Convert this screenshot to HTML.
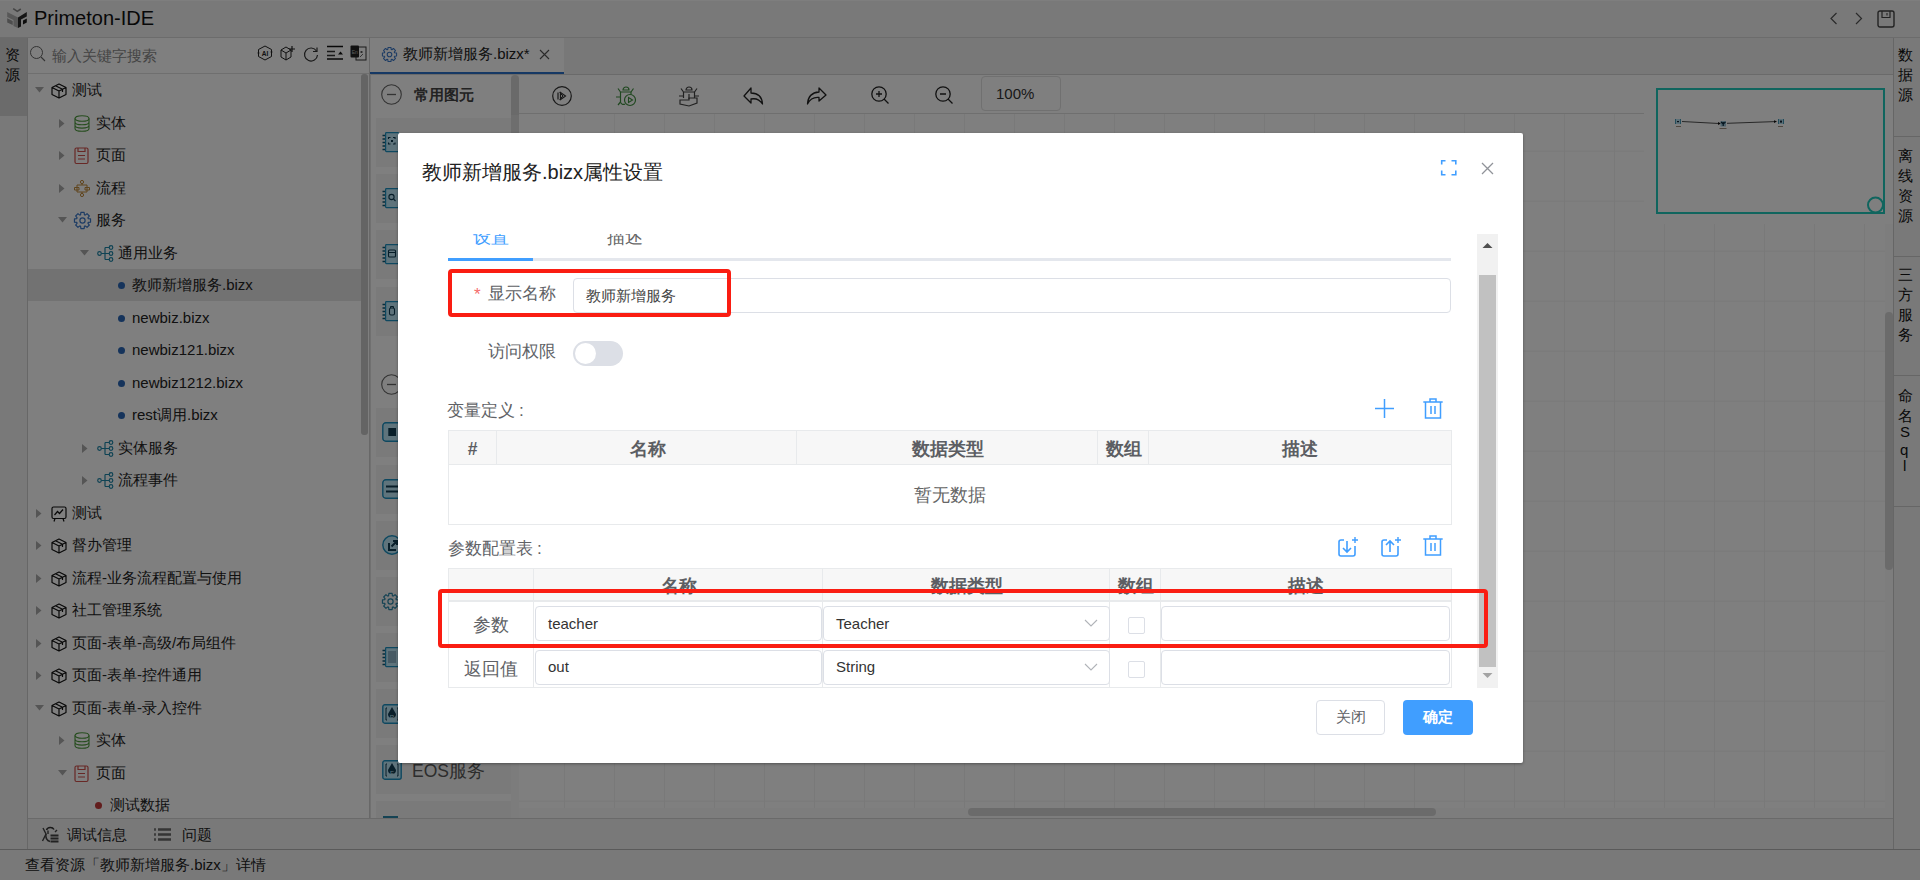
<!DOCTYPE html><html><head><meta charset="utf-8"><style>
*{box-sizing:border-box;margin:0;padding:0}
html,body{width:1920px;height:880px;overflow:hidden;background:#fff;font-family:"Liberation Sans",sans-serif;color:#222}
.a{position:absolute}
svg{position:absolute;overflow:visible}
.t{position:absolute;white-space:nowrap}
</style></head><body><div class="a" style="left:0px;top:0px;width:1920px;height:38px;background:#f3f3f3;border-bottom:1px solid #d9d9d9"></div>
<div class="a" style="left:0px;top:0px;width:1920px;height:1px;background:#fcfcfc"></div>
<svg class="a" style="left:4px;top:4px" width="28" height="28" viewBox="0 0 28 28" >
<path d="M9.2 4.6 L13.3 7.4 L16.8 5" fill="none" stroke="#888" stroke-width="1.6"/>
<path d="M3.2 8 L14 13.4 L14 24 L9.5 22 L9.5 16 L3.2 13Z" fill="#b0b0b0"/>
<path d="M3.2 14.3 L8.7 17 L8.7 21 L3.2 18.5Z" fill="#9a9a9a"/>
<path d="M14 13.4 L22.8 8 L22.8 12.5 L17 15.6 L17 22.5 L14 24Z" fill="#2a2a2a"/>
<path d="M19 16.5 L22.8 14.5 L22.8 18.5 L19 20.5Z" fill="#1a1a1a"/>
</svg>
<div class="t" style="left:34px;top:7px;font-size:20px;line-height:22px;color:#111;font-weight:normal;line-height:22px">Primeton-IDE</div>
<svg class="a" style="left:1829px;top:12px" width="10" height="14" viewBox="0 0 10 14" ><path d="M7.5 1 L2 6.5 L7.5 12" fill="none" stroke="#555" stroke-width="1.2"/></svg>
<svg class="a" style="left:1854px;top:12px" width="10" height="14" viewBox="0 0 10 14" ><path d="M2 1 L7.5 6.5 L2 12" fill="none" stroke="#555" stroke-width="1.2"/></svg>
<svg class="a" style="left:1877px;top:10px" width="18" height="18" viewBox="0 0 18 18" ><rect x="1" y="1" width="16" height="16" rx="2" fill="none" stroke="#444" stroke-width="1.4"/><path d="M5 1 V7.5 H13 V1" fill="none" stroke="#444" stroke-width="1.2"/><path d="M10 3 V5.5" stroke="#444" stroke-width="1.1"/></svg>
<div class="a" style="left:0px;top:38px;width:28px;height:811px;background:#f3f3f3;border-right:1px solid #cfcfcf"></div>
<div class="a" style="left:0px;top:38px;width:27px;height:78px;background:#d6d6d6"></div>
<div class="t" style="left:5px;top:46px;font-size:15px;line-height:17px;color:#111;font-weight:normal;">资</div>
<div class="t" style="left:5px;top:66px;font-size:15px;line-height:17px;color:#111;font-weight:normal;">源</div>
<div class="a" style="left:28px;top:38px;width:341px;height:780px;background:#fff"></div>
<div class="a" style="left:369px;top:38px;width:1px;height:780px;background:#d0d0d0"></div>
<div class="a" style="left:28px;top:73px;width:341px;height:1px;background:#dedede"></div>
<svg class="a" style="left:30px;top:46px" width="16" height="16" viewBox="0 0 16 16" ><circle cx="6.5" cy="6.5" r="6" fill="none" stroke="#666" stroke-width="1"/><path d="M11 11 L15 15" stroke="#666" stroke-width="1.1"/></svg>
<div class="t" style="left:52px;top:47px;font-size:15px;line-height:17px;color:#8a8a8a;font-weight:normal;">输入关键字搜索</div>
<svg class="a" style="left:257px;top:45px" width="16" height="16" viewBox="0 0 16 16" ><path d="M8 1 L14.5 4.5 L14.5 11.5 L8 15 L1.5 11.5 L1.5 4.5Z" fill="none" stroke="#222" stroke-width="1"/><circle cx="1.5" cy="8" r="0.9" fill="#222"/><circle cx="14.5" cy="7" r="0.9" fill="#222"/><text x="8" y="10.8" font-size="6.5" font-weight="bold" text-anchor="middle" fill="#222" font-family="Liberation Sans">AI</text></svg>
<svg class="a" style="left:280px;top:45px" width="17" height="16" viewBox="0 0 17 16" ><path d="M1 5 L6 2 L11 5 L11 12 L6 15 L1 12Z M1 5 L6 8 L11 5 M6 8 V15" fill="none" stroke="#222" stroke-width="1"/><path d="M12 1 V7 M9 4 H15" stroke="#222" stroke-width="1.2"/></svg>
<svg class="a" style="left:303px;top:46px" width="16" height="16" viewBox="0 0 16 16" ><path d="M13.5 5 A6.5 6.5 0 1 0 14.5 9" fill="none" stroke="#333" stroke-width="1.2"/><path d="M10 5.5 L14 5.5 L14 1.5" fill="none" stroke="#333" stroke-width="1.2"/></svg>
<svg class="a" style="left:327px;top:45px" width="16" height="16" viewBox="0 0 16 16" ><path d="M0 1.5 H16 M0 14 H16" stroke="#111" stroke-width="1.3"/><path d="M0 6.5 H8 M0 10.5 H8" stroke="#333" stroke-width="1.3"/><path d="M11 9.5 L13.5 6.5 L16 9.5Z" fill="#111"/></svg>
<svg class="a" style="left:350px;top:45px" width="17" height="16" viewBox="0 0 17 16" ><rect x="6" y="2" width="10" height="13" fill="none" stroke="#333" stroke-width="1"/><rect x="0.5" y="0.5" width="8.5" height="12" rx="1" fill="#222"/><text x="4.7" y="8.5" font-size="5" fill="#bbb" text-anchor="middle" font-family="Liberation Sans">En</text><path d="M10 7 L13 7 M11.5 6 L11.5 8 M10 12 L13 9" stroke="#444" stroke-width="0.8"/></svg>
<div class="a" style="left:361px;top:74px;width:7px;height:361px;background:#c8c8c8;border-radius:3px"></div>
<div class="a" style="left:0;top:0;width:369px;height:818px;overflow:hidden"><div class="a" style="left:28px;top:269px;width:333px;height:32px;background:#e4e4e4"></div><svg class="a" style="left:35px;top:87.0px" width="9" height="6" viewBox="0 0 9 6" ><path d="M0 0 H9 L4.5 5.5Z" fill="#aaa"/></svg><svg class="a" style="left:51px;top:82.5px" width="16" height="16" viewBox="0 0 16 16" ><path d="M8 1 L15 4.5 L15 11.5 L8 15 L1 11.5 L1 4.5Z M1 4.5 L8 8 L15 4.5 M8 8 V15 M4.5 2.8 L11.5 6.3 V9" fill="none" stroke="#111" stroke-width="1.2" stroke-linejoin="round"/></svg><div class="t" style="left:72px;top:81px;font-size:15px;line-height:17px;color:#222;font-weight:normal;"><span style="font-size:15px">测试</span></div><svg class="a" style="left:59px;top:118.5px" width="6" height="9" viewBox="0 0 6 9" ><path d="M0 0 V9 L5.5 4.5Z" fill="#aaa"/></svg><svg class="a" style="left:74px;top:115.0px" width="16" height="17" viewBox="0 0 16 17" ><ellipse cx="8" cy="3.5" rx="7" ry="2.8" fill="none" stroke="#4c9a3c" stroke-width="1.1"/><path d="M1 3.5 V13.5 A7 2.8 0 0 0 15 13.5 V3.5 M1 7 A7 2.8 0 0 0 15 7 M1 10.3 A7 2.8 0 0 0 15 10.3" fill="none" stroke="#4c9a3c" stroke-width="1.1"/></svg><div class="t" style="left:96px;top:114px;font-size:15px;line-height:17px;color:#222;font-weight:normal;"><span style="font-size:15px">实体</span></div><svg class="a" style="left:59px;top:150.5px" width="6" height="9" viewBox="0 0 6 9" ><path d="M0 0 V9 L5.5 4.5Z" fill="#aaa"/></svg><svg class="a" style="left:74px;top:147.0px" width="15" height="17" viewBox="0 0 15 17" ><rect x="1" y="1" width="13" height="15.5" rx="1.5" fill="none" stroke="#d0504c" stroke-width="1.2"/><path d="M4 1 V4.5 H11 V1 M4 8.5 H11 M4 12 H11" fill="none" stroke="#d0504c" stroke-width="1.2"/></svg><div class="t" style="left:96px;top:146px;font-size:15px;line-height:17px;color:#222;font-weight:normal;"><span style="font-size:15px">页面</span></div><svg class="a" style="left:59px;top:183.5px" width="6" height="9" viewBox="0 0 6 9" ><path d="M0 0 V9 L5.5 4.5Z" fill="#aaa"/></svg><svg class="a" style="left:74px;top:180.0px" width="16" height="17" viewBox="0 0 16 17" ><circle cx="8" cy="2" r="1.6" fill="none" stroke="#c08a3a" stroke-width="1"/><circle cx="8" cy="15" r="1.6" fill="none" stroke="#c08a3a" stroke-width="1"/><path d="M8 3.6 V5 M8 12 V13.4 M3 5 H13 V12 H3Z M0.5 7.5 H5 V10 H0.5Z M11 7.5 H15.5 V10 H11Z" fill="none" stroke="#c08a3a" stroke-width="1"/></svg><div class="t" style="left:96px;top:179px;font-size:15px;line-height:17px;color:#222;font-weight:normal;"><span style="font-size:15px">流程</span></div><svg class="a" style="left:58px;top:217.0px" width="9" height="6" viewBox="0 0 9 6" ><path d="M0 0 H9 L4.5 5.5Z" fill="#aaa"/></svg><svg class="a" style="left:74px;top:212.0px" width="17" height="17" viewBox="0 0 17 17" ><path d="M14.18 6.56 L16.54 6.87 L16.54 10.13 L14.18 10.44 L13.89 11.14 L15.33 13.03 L13.03 15.33 L11.14 13.89 L10.44 14.18 L10.13 16.54 L6.87 16.54 L6.56 14.18 L5.86 13.89 L3.97 15.33 L1.67 13.03 L3.11 11.14 L2.82 10.44 L0.46 10.13 L0.46 6.87 L2.82 6.56 L3.11 5.86 L1.67 3.97 L3.97 1.67 L5.86 3.11 L6.56 2.82 L6.87 0.46 L10.13 0.46 L10.44 2.82 L11.14 3.11 L13.03 1.67 L15.33 3.97 L13.89 5.86Z" fill="none" stroke="#3a78c9" stroke-width="1.2" stroke-linejoin="round"/><circle cx="8.5" cy="8.5" r="2.6" fill="none" stroke="#3a78c9" stroke-width="1.2"/></svg><div class="t" style="left:96px;top:211px;font-size:15px;line-height:17px;color:#222;font-weight:normal;"><span style="font-size:15px">服务</span></div><svg class="a" style="left:80px;top:250.0px" width="9" height="6" viewBox="0 0 9 6" ><path d="M0 0 H9 L4.5 5.5Z" fill="#aaa"/></svg><svg class="a" style="left:97px;top:245.0px" width="17" height="17" viewBox="0 0 17 17" ><circle cx="2.5" cy="8.5" r="1.8" fill="none" stroke="#1f86a8" stroke-width="1.2"/><circle cx="14" cy="2.5" r="1.8" fill="none" stroke="#1f86a8" stroke-width="1.2"/><circle cx="14" cy="8.5" r="1.8" fill="none" stroke="#1f86a8" stroke-width="1.2"/><circle cx="14" cy="14.5" r="1.8" fill="none" stroke="#1f86a8" stroke-width="1.2"/><path d="M4.3 8.5 H12.2 M8 2.5 V14.5 M8 2.5 H12.2 M8 14.5 H12.2" fill="none" stroke="#1f86a8" stroke-width="1.2"/></svg><div class="t" style="left:118px;top:244px;font-size:15px;line-height:17px;color:#222;font-weight:normal;"><span style="font-size:15px">通用业务</span></div><div class="a" style="left:118px;top:282px;width:7px;height:7px;border-radius:4px;background:#2a67b6"></div><div class="t" style="left:132px;top:276px;font-size:15px;line-height:17px;color:#222;font-weight:normal;"><span style="font-size:15px">教师新增服务</span>.bizx</div><div class="a" style="left:118px;top:315px;width:7px;height:7px;border-radius:4px;background:#2a67b6"></div><div class="t" style="left:132px;top:309px;font-size:15px;line-height:17px;color:#222;font-weight:normal;">newbiz.bizx</div><div class="a" style="left:118px;top:347px;width:7px;height:7px;border-radius:4px;background:#2a67b6"></div><div class="t" style="left:132px;top:341px;font-size:15px;line-height:17px;color:#222;font-weight:normal;">newbiz121.bizx</div><div class="a" style="left:118px;top:380px;width:7px;height:7px;border-radius:4px;background:#2a67b6"></div><div class="t" style="left:132px;top:374px;font-size:15px;line-height:17px;color:#222;font-weight:normal;">newbiz1212.bizx</div><div class="a" style="left:118px;top:412px;width:7px;height:7px;border-radius:4px;background:#2a67b6"></div><div class="t" style="left:132px;top:406px;font-size:15px;line-height:17px;color:#222;font-weight:normal;">rest<span style="font-size:15px">调用</span>.bizx</div><svg class="a" style="left:82px;top:443.5px" width="6" height="9" viewBox="0 0 6 9" ><path d="M0 0 V9 L5.5 4.5Z" fill="#aaa"/></svg><svg class="a" style="left:97px;top:440.0px" width="17" height="17" viewBox="0 0 17 17" ><circle cx="2.5" cy="8.5" r="1.8" fill="none" stroke="#1f86a8" stroke-width="1.2"/><circle cx="14" cy="2.5" r="1.8" fill="none" stroke="#1f86a8" stroke-width="1.2"/><circle cx="14" cy="8.5" r="1.8" fill="none" stroke="#1f86a8" stroke-width="1.2"/><circle cx="14" cy="14.5" r="1.8" fill="none" stroke="#1f86a8" stroke-width="1.2"/><path d="M4.3 8.5 H12.2 M8 2.5 V14.5 M8 2.5 H12.2 M8 14.5 H12.2" fill="none" stroke="#1f86a8" stroke-width="1.2"/></svg><div class="t" style="left:118px;top:439px;font-size:15px;line-height:17px;color:#222;font-weight:normal;"><span style="font-size:15px">实体服务</span></div><svg class="a" style="left:82px;top:475.5px" width="6" height="9" viewBox="0 0 6 9" ><path d="M0 0 V9 L5.5 4.5Z" fill="#aaa"/></svg><svg class="a" style="left:97px;top:472.0px" width="17" height="17" viewBox="0 0 17 17" ><circle cx="2.5" cy="8.5" r="1.8" fill="none" stroke="#1f86a8" stroke-width="1.2"/><circle cx="14" cy="2.5" r="1.8" fill="none" stroke="#1f86a8" stroke-width="1.2"/><circle cx="14" cy="8.5" r="1.8" fill="none" stroke="#1f86a8" stroke-width="1.2"/><circle cx="14" cy="14.5" r="1.8" fill="none" stroke="#1f86a8" stroke-width="1.2"/><path d="M4.3 8.5 H12.2 M8 2.5 V14.5 M8 2.5 H12.2 M8 14.5 H12.2" fill="none" stroke="#1f86a8" stroke-width="1.2"/></svg><div class="t" style="left:118px;top:471px;font-size:15px;line-height:17px;color:#222;font-weight:normal;"><span style="font-size:15px">流程事件</span></div><svg class="a" style="left:36px;top:508.5px" width="6" height="9" viewBox="0 0 6 9" ><path d="M0 0 V9 L5.5 4.5Z" fill="#aaa"/></svg><svg class="a" style="left:51px;top:505.5px" width="16" height="16" viewBox="0 0 16 16" ><rect x="1" y="1" width="14" height="11.5" rx="1.5" fill="none" stroke="#111" stroke-width="1.2"/><path d="M3.5 9 L6.5 5.5 L8.5 7.5 L12 3.5 M4 12.5 L3 15.5 M12 12.5 L13 15.5" fill="none" stroke="#111" stroke-width="1.2"/></svg><div class="t" style="left:72px;top:504px;font-size:15px;line-height:17px;color:#222;font-weight:normal;"><span style="font-size:15px">测试</span></div><svg class="a" style="left:36px;top:540.5px" width="6" height="9" viewBox="0 0 6 9" ><path d="M0 0 V9 L5.5 4.5Z" fill="#aaa"/></svg><svg class="a" style="left:51px;top:537.5px" width="16" height="16" viewBox="0 0 16 16" ><path d="M8 1 L15 4.5 L15 11.5 L8 15 L1 11.5 L1 4.5Z M1 4.5 L8 8 L15 4.5 M8 8 V15 M4.5 2.8 L11.5 6.3 V9" fill="none" stroke="#111" stroke-width="1.2" stroke-linejoin="round"/></svg><div class="t" style="left:72px;top:536px;font-size:15px;line-height:17px;color:#222;font-weight:normal;"><span style="font-size:15px">督办管理</span></div><svg class="a" style="left:36px;top:573.5px" width="6" height="9" viewBox="0 0 6 9" ><path d="M0 0 V9 L5.5 4.5Z" fill="#aaa"/></svg><svg class="a" style="left:51px;top:570.5px" width="16" height="16" viewBox="0 0 16 16" ><path d="M8 1 L15 4.5 L15 11.5 L8 15 L1 11.5 L1 4.5Z M1 4.5 L8 8 L15 4.5 M8 8 V15 M4.5 2.8 L11.5 6.3 V9" fill="none" stroke="#111" stroke-width="1.2" stroke-linejoin="round"/></svg><div class="t" style="left:72px;top:569px;font-size:15px;line-height:17px;color:#222;font-weight:normal;"><span style="font-size:15px">流程</span>-<span style="font-size:15px">业务流程配置与使用</span></div><svg class="a" style="left:36px;top:605.5px" width="6" height="9" viewBox="0 0 6 9" ><path d="M0 0 V9 L5.5 4.5Z" fill="#aaa"/></svg><svg class="a" style="left:51px;top:602.5px" width="16" height="16" viewBox="0 0 16 16" ><path d="M8 1 L15 4.5 L15 11.5 L8 15 L1 11.5 L1 4.5Z M1 4.5 L8 8 L15 4.5 M8 8 V15 M4.5 2.8 L11.5 6.3 V9" fill="none" stroke="#111" stroke-width="1.2" stroke-linejoin="round"/></svg><div class="t" style="left:72px;top:601px;font-size:15px;line-height:17px;color:#222;font-weight:normal;"><span style="font-size:15px">社工管理系统</span></div><svg class="a" style="left:36px;top:638.5px" width="6" height="9" viewBox="0 0 6 9" ><path d="M0 0 V9 L5.5 4.5Z" fill="#aaa"/></svg><svg class="a" style="left:51px;top:635.5px" width="16" height="16" viewBox="0 0 16 16" ><path d="M8 1 L15 4.5 L15 11.5 L8 15 L1 11.5 L1 4.5Z M1 4.5 L8 8 L15 4.5 M8 8 V15 M4.5 2.8 L11.5 6.3 V9" fill="none" stroke="#111" stroke-width="1.2" stroke-linejoin="round"/></svg><div class="t" style="left:72px;top:634px;font-size:15px;line-height:17px;color:#222;font-weight:normal;"><span style="font-size:15px">页面</span>-<span style="font-size:15px">表单</span>-<span style="font-size:15px">高级</span>/<span style="font-size:15px">布局组件</span></div><svg class="a" style="left:36px;top:670.5px" width="6" height="9" viewBox="0 0 6 9" ><path d="M0 0 V9 L5.5 4.5Z" fill="#aaa"/></svg><svg class="a" style="left:51px;top:667.5px" width="16" height="16" viewBox="0 0 16 16" ><path d="M8 1 L15 4.5 L15 11.5 L8 15 L1 11.5 L1 4.5Z M1 4.5 L8 8 L15 4.5 M8 8 V15 M4.5 2.8 L11.5 6.3 V9" fill="none" stroke="#111" stroke-width="1.2" stroke-linejoin="round"/></svg><div class="t" style="left:72px;top:666px;font-size:15px;line-height:17px;color:#222;font-weight:normal;"><span style="font-size:15px">页面</span>-<span style="font-size:15px">表单</span>-<span style="font-size:15px">控件通用</span></div><svg class="a" style="left:35px;top:705.0px" width="9" height="6" viewBox="0 0 9 6" ><path d="M0 0 H9 L4.5 5.5Z" fill="#aaa"/></svg><svg class="a" style="left:51px;top:700.5px" width="16" height="16" viewBox="0 0 16 16" ><path d="M8 1 L15 4.5 L15 11.5 L8 15 L1 11.5 L1 4.5Z M1 4.5 L8 8 L15 4.5 M8 8 V15 M4.5 2.8 L11.5 6.3 V9" fill="none" stroke="#111" stroke-width="1.2" stroke-linejoin="round"/></svg><div class="t" style="left:72px;top:699px;font-size:15px;line-height:17px;color:#222;font-weight:normal;"><span style="font-size:15px">页面</span>-<span style="font-size:15px">表单</span>-<span style="font-size:15px">录入控件</span></div><svg class="a" style="left:59px;top:735.5px" width="6" height="9" viewBox="0 0 6 9" ><path d="M0 0 V9 L5.5 4.5Z" fill="#aaa"/></svg><svg class="a" style="left:74px;top:732.0px" width="16" height="17" viewBox="0 0 16 17" ><ellipse cx="8" cy="3.5" rx="7" ry="2.8" fill="none" stroke="#4c9a3c" stroke-width="1.1"/><path d="M1 3.5 V13.5 A7 2.8 0 0 0 15 13.5 V3.5 M1 7 A7 2.8 0 0 0 15 7 M1 10.3 A7 2.8 0 0 0 15 10.3" fill="none" stroke="#4c9a3c" stroke-width="1.1"/></svg><div class="t" style="left:96px;top:731px;font-size:15px;line-height:17px;color:#222;font-weight:normal;"><span style="font-size:15px">实体</span></div><svg class="a" style="left:58px;top:770.0px" width="9" height="6" viewBox="0 0 9 6" ><path d="M0 0 H9 L4.5 5.5Z" fill="#aaa"/></svg><svg class="a" style="left:74px;top:765.0px" width="15" height="17" viewBox="0 0 15 17" ><rect x="1" y="1" width="13" height="15.5" rx="1.5" fill="none" stroke="#d0504c" stroke-width="1.2"/><path d="M4 1 V4.5 H11 V1 M4 8.5 H11 M4 12 H11" fill="none" stroke="#d0504c" stroke-width="1.2"/></svg><div class="t" style="left:96px;top:764px;font-size:15px;line-height:17px;color:#222;font-weight:normal;"><span style="font-size:15px">页面</span></div><div class="a" style="left:95px;top:802px;width:7px;height:7px;border-radius:4px;background:#c43a3a"></div><div class="t" style="left:110px;top:796px;font-size:15px;line-height:17px;color:#222;font-weight:normal;"><span style="font-size:15px">测试数据</span></div></div>
<div class="a" style="left:370px;top:38px;width:1523px;height:37px;background:#f1f1f1;border-bottom:1px solid #d4d4d4"></div>
<div class="a" style="left:370px;top:38px;width:194px;height:36px;background:#fefefe"></div>
<div class="a" style="left:370px;top:72px;width:194px;height:2px;background:#2a70c8"></div>
<svg class="a" style="left:382px;top:47.0px" width="15" height="15" viewBox="0 0 17 17" ><path d="M14.18 6.56 L16.54 6.87 L16.54 10.13 L14.18 10.44 L13.89 11.14 L15.33 13.03 L13.03 15.33 L11.14 13.89 L10.44 14.18 L10.13 16.54 L6.87 16.54 L6.56 14.18 L5.86 13.89 L3.97 15.33 L1.67 13.03 L3.11 11.14 L2.82 10.44 L0.46 10.13 L0.46 6.87 L2.82 6.56 L3.11 5.86 L1.67 3.97 L3.97 1.67 L5.86 3.11 L6.56 2.82 L6.87 0.46 L10.13 0.46 L10.44 2.82 L11.14 3.11 L13.03 1.67 L15.33 3.97 L13.89 5.86Z" fill="none" stroke="#3a78c9" stroke-width="1.2" stroke-linejoin="round"/><circle cx="8.5" cy="8.5" r="2.6" fill="none" stroke="#3a78c9" stroke-width="1.2"/></svg>
<div class="t" style="left:403px;top:45px;font-size:15px;line-height:17px;color:#222;font-weight:normal;">教师新增服务.bizx*</div>
<svg class="a" style="left:539px;top:49px" width="11" height="11" viewBox="0 0 11 11" ><path d="M1 1 L10 10 M10 1 L1 10" stroke="#555" stroke-width="1.1"/></svg>
<div class="a" style="left:370px;top:75px;width:142px;height:743px;background:#fefefe"></div>
<div class="a" style="left:511px;top:75px;width:8px;height:743px;background:#f8f8f8"></div>
<div class="a" style="left:511px;top:115px;width:8px;height:100px;background:#dcdcdc"></div>
<div class="a" style="left:511px;top:75px;width:8px;height:40px;background:#d4d4d4;border-radius:4px 4px 0 0"></div>
<svg class="a" style="left:381px;top:84px" width="21" height="21" viewBox="0 0 21 21" ><circle cx="10.5" cy="10.5" r="9.8" fill="none" stroke="#666" stroke-width="1.1"/><path d="M6 10.5 H15" stroke="#666" stroke-width="1.3"/></svg>
<div class="t" style="left:414px;top:86px;font-size:15px;line-height:17px;color:#444;font-weight:bold;">常用图元</div>
<div class="a" style="left:376px;top:118px;width:135px;height:49px;background:#f5f5f5"></div>
<div class="a" style="left:376px;top:174px;width:135px;height:49px;background:#f5f5f5"></div>
<div class="a" style="left:376px;top:230px;width:135px;height:49px;background:#f5f5f5"></div>
<div class="a" style="left:376px;top:287px;width:135px;height:49px;background:#f5f5f5"></div>
<svg class="a" style="left:382px;top:132px" width="17" height="20" viewBox="0 0 17 20" ><path d="M0.5 3.5 H3 M0.5 7 H3 M0.5 10.5 H3 M0.5 14 H3 M0.5 17.5 H3" stroke="#0f5a78" stroke-width="1.3"/><rect x="3.6" y="0.6" width="13" height="19" rx="0.8" fill="#bfe8f8" stroke="#1c90c0" stroke-width="1.2"/><path d="M6.5 7 V5.5 H8.5 M11 5.5 H13 V7 M13 10.5 V12 H11 M8.5 12 H6.5 V10.5" fill="none" stroke="#0d3a50" stroke-width="1.1"/><rect x="9" y="8" width="2" height="2" fill="#0d3a50"/></svg>
<svg class="a" style="left:382px;top:188px" width="17" height="20" viewBox="0 0 17 20" ><path d="M0.5 3.5 H3 M0.5 7 H3 M0.5 10.5 H3 M0.5 14 H3 M0.5 17.5 H3" stroke="#0f5a78" stroke-width="1.3"/><rect x="3.6" y="0.6" width="13" height="19" rx="0.8" fill="#bfe8f8" stroke="#1c90c0" stroke-width="1.2"/><circle cx="9.5" cy="9" r="2.6" fill="none" stroke="#0d3a50" stroke-width="1.1"/><path d="M11.5 11 L13.5 13" stroke="#0d3a50" stroke-width="1.1"/></svg>
<svg class="a" style="left:382px;top:244px" width="17" height="20" viewBox="0 0 17 20" ><path d="M0.5 3.5 H3 M0.5 7 H3 M0.5 10.5 H3 M0.5 14 H3 M0.5 17.5 H3" stroke="#0f5a78" stroke-width="1.3"/><rect x="3.6" y="0.6" width="13" height="19" rx="0.8" fill="#bfe8f8" stroke="#1c90c0" stroke-width="1.2"/><rect x="6.5" y="6" width="7" height="7" rx="1" fill="none" stroke="#0d3a50" stroke-width="1.1"/><path d="M6.5 8.5 H13.5" stroke="#0d3a50" stroke-width="1"/></svg>
<svg class="a" style="left:382px;top:301px" width="17" height="20" viewBox="0 0 17 20" ><path d="M0.5 3.5 H3 M0.5 7 H3 M0.5 10.5 H3 M0.5 14 H3 M0.5 17.5 H3" stroke="#0f5a78" stroke-width="1.3"/><rect x="3.6" y="0.6" width="13" height="19" rx="0.8" fill="#bfe8f8" stroke="#1c90c0" stroke-width="1.2"/><rect x="7.5" y="7" width="5" height="7" rx="1.5" fill="none" stroke="#0d3a50" stroke-width="1.1"/><path d="M8.5 7 V5.5 H11.5 V7" fill="none" stroke="#0d3a50" stroke-width="1"/></svg>
<svg class="a" style="left:381px;top:374px" width="21" height="21" viewBox="0 0 21 21" ><circle cx="10.5" cy="10.5" r="9.8" fill="none" stroke="#666" stroke-width="1.1"/><path d="M6 10.5 H15" stroke="#666" stroke-width="1.3"/></svg>
<div class="a" style="left:376px;top:408px;width:135px;height:49px;background:#f5f5f5"></div>
<div class="a" style="left:376px;top:465px;width:135px;height:49px;background:#f5f5f5"></div>
<div class="a" style="left:376px;top:521px;width:135px;height:49px;background:#f5f5f5"></div>
<div class="a" style="left:376px;top:577px;width:135px;height:49px;background:#f5f5f5"></div>
<div class="a" style="left:376px;top:633px;width:135px;height:49px;background:#f5f5f5"></div>
<div class="a" style="left:376px;top:689px;width:135px;height:49px;background:#f5f5f5"></div>
<div class="a" style="left:376px;top:745px;width:135px;height:49px;background:#f5f5f5"></div>
<div class="a" style="left:376px;top:801px;width:135px;height:49px;background:#f5f5f5"></div>
<svg class="a" style="left:382px;top:422px" width="20" height="20" viewBox="0 0 20 20" ><rect x="0.8" y="0.8" width="18.4" height="18.4" rx="3" fill="#bfe8f8" stroke="#1c90c0" stroke-width="1.4"/><rect x="6.3" y="6" width="7.7" height="8" fill="#123e55"/></svg>
<svg class="a" style="left:382px;top:479px" width="20" height="20" viewBox="0 0 20 20" ><rect x="0.8" y="0.8" width="18.4" height="18.4" rx="3" fill="#bfe8f8" stroke="#1c90c0" stroke-width="1.4"/><path d="M4 7.5 H16 M4 12.5 H16" stroke="#123e55" stroke-width="2.2"/></svg>
<svg class="a" style="left:382px;top:535px" width="20" height="20" viewBox="0 0 20 20" ><circle cx="10" cy="10" r="9.2" fill="#bfe8f8" stroke="#1c90c0" stroke-width="1.4"/><path d="M7 8 V15 H14 M9.5 11.5 L14 7 M11 6 H15 V10" fill="none" stroke="#123e55" stroke-width="2"/></svg>
<svg class="a" style="left:382px;top:592.5px" width="17" height="17" viewBox="0 0 17 17" ><path d="M14.18 6.56 L16.54 6.87 L16.54 10.13 L14.18 10.44 L13.89 11.14 L15.33 13.03 L13.03 15.33 L11.14 13.89 L10.44 14.18 L10.13 16.54 L6.87 16.54 L6.56 14.18 L5.86 13.89 L3.97 15.33 L1.67 13.03 L3.11 11.14 L2.82 10.44 L0.46 10.13 L0.46 6.87 L2.82 6.56 L3.11 5.86 L1.67 3.97 L3.97 1.67 L5.86 3.11 L6.56 2.82 L6.87 0.46 L10.13 0.46 L10.44 2.82 L11.14 3.11 L13.03 1.67 L15.33 3.97 L13.89 5.86Z" fill="none" stroke="#2a86a8" stroke-width="1.2" stroke-linejoin="round"/><circle cx="8.5" cy="8.5" r="2.6" fill="none" stroke="#2a86a8" stroke-width="1.2"/></svg>
<svg class="a" style="left:382px;top:647px" width="17" height="20" viewBox="0 0 17 20" ><path d="M0.5 3.5 H3 M0.5 7 H3 M0.5 10.5 H3 M0.5 14 H3 M0.5 17.5 H3" stroke="#0f5a78" stroke-width="1.3"/><rect x="3.6" y="0.6" width="13" height="19" rx="0.8" fill="#bfe8f8" stroke="#1c90c0" stroke-width="1.2"/><rect x="6" y="4" width="8" height="12" fill="#8fb5c8"/></svg>
<svg class="a" style="left:382px;top:704px" width="20" height="20" viewBox="0 0 20 20" ><rect x="0.8" y="0.8" width="18.4" height="18.4" rx="2" fill="#bfe8f8" stroke="#1c90c0" stroke-width="1.4"/><path d="M5 4 H4 V16 H5 M15 4 H16 V16 H15" fill="none" stroke="#123e55" stroke-width="1"/><path d="M10 3 L14 10 A4 4 0 1 1 6 10Z" fill="#123e55"/><text x="10" y="15" font-size="6" text-anchor="middle" fill="#bfe8f8" font-family="Liberation Sans">R</text></svg>
<svg class="a" style="left:382px;top:760px" width="20" height="20" viewBox="0 0 20 20" ><rect x="0.8" y="0.8" width="18.4" height="18.4" rx="2" fill="#bfe8f8" stroke="#1c90c0" stroke-width="1.4"/><path d="M5 4 H4 V16 H5 M15 4 H16 V16 H15" fill="none" stroke="#123e55" stroke-width="1"/><path d="M10 3 L14 10 A4 4 0 1 1 6 10Z" fill="#123e55"/><text x="10" y="15" font-size="6" text-anchor="middle" fill="#bfe8f8" font-family="Liberation Sans">E</text></svg>
<div class="t" style="left:412px;top:762px;font-size:17.5px;line-height:19.5px;color:#5a5a5a;font-weight:normal;">EOS服务</div>
<svg class="a" style="left:382px;top:816px" width="17" height="4" viewBox="0 0 17 4" ><path d="M1 1 H16" stroke="#2a86a8" stroke-width="2"/></svg>
<div class="a" style="left:370px;top:74px;width:1px;height:744px;background:#e0e0e0"></div>
<div class="a" style="left:519px;top:75px;width:1374px;height:39px;background:#fff;border-bottom:1px solid #dedede"></div>
<div class="a" style="left:519px;top:114px;width:1374px;height:704px;background:#fafafa"></div>
<div class="a" style="left:519px;top:114px;width:1366px;height:694px;background-color:#fff;background-image:linear-gradient(#f2f2f2 1px,transparent 1px),linear-gradient(90deg,#f2f2f2 1px,transparent 1px);background-size:50px 50px;background-position:-6px 0px;background-position:45px 36.7px"></div>
<div class="a" style="left:1644px;top:75px;width:249px;height:149px;background:#fff"></div>
<svg class="a" style="left:552px;top:86px" width="20" height="20" viewBox="0 0 20 20" ><circle cx="10" cy="10" r="9.3" fill="none" stroke="#333" stroke-width="1.2"/><path d="M6 6.5 V13.5 M8.5 6.5 L13.5 10 L8.5 13.5Z" fill="none" stroke="#333" stroke-width="1.2"/><path d="M7.5 6.5 L11 10 L7.5 13.5" fill="none" stroke="#333" stroke-width="1"/></svg>
<svg class="a" style="left:616px;top:86px" width="21" height="20" viewBox="0 0 21 20" ><path d="M7 4 A3 3 0 0 1 13 4Z" fill="none" stroke="#3f8f3f" stroke-width="1.2"/><path d="M4.5 6 H15 V11 M4.5 6 V16 A3 3 0 0 0 9 18" fill="none" stroke="#3f8f3f" stroke-width="1.2"/><path d="M2 2.5 L4.5 6 M17.5 2.5 L15 6 M0 11 H4.5 M2 19 L4.5 16" stroke="#3f8f3f" stroke-width="1.2"/><circle cx="14" cy="14" r="5.5" fill="#fff" stroke="#3f8f3f" stroke-width="1.2"/><path d="M12.5 11.5 L16.5 14 L12.5 16.5Z" fill="none" stroke="#3f8f3f" stroke-width="1.1"/></svg>
<svg class="a" style="left:679px;top:86px" width="20" height="20" viewBox="0 0 20 20" ><path d="M7 4 A3 3 0 0 1 13 4Z" fill="none" stroke="#444" stroke-width="1.2"/><path d="M4.5 6 H15.5 V12 M4.5 6 V12 M10 8 V13" fill="none" stroke="#444" stroke-width="1.2"/><path d="M2 2.5 L4.5 6 M18 2.5 L15.5 6 M0 10 H4.5 M15.5 10 H20" stroke="#444" stroke-width="1.2"/><path d="M1 14 H10 V12 H18 L18 17 L10 20 L1 18Z" fill="none" stroke="#444" stroke-width="1.2"/></svg>
<svg class="a" style="left:743px;top:87px" width="21" height="18" viewBox="0 0 21 18" ><path d="M8 1 L1 9 L8 16 L8 12 C13 11 17 13 19.5 17 C19 10 15 6 8 6Z" fill="none" stroke="#222" stroke-width="1.3" stroke-linejoin="round"/></svg>
<svg class="a" style="left:806px;top:87px" width="21" height="18" viewBox="0 0 21 18" ><path d="M13 1 L20 8 L13 14 L13 10.5 C8 10 4 12 1.5 17 C2 9 6 5.5 13 5Z" fill="none" stroke="#222" stroke-width="1.3" stroke-linejoin="round"/></svg>
<svg class="a" style="left:871px;top:86px" width="19" height="19" viewBox="0 0 19 19" ><circle cx="8" cy="8" r="7.2" fill="none" stroke="#222" stroke-width="1.3"/><path d="M13 13 L17.5 17.5 M5 8 H11 M8 5 V11" stroke="#222" stroke-width="1.3"/></svg>
<svg class="a" style="left:935px;top:86px" width="19" height="19" viewBox="0 0 19 19" ><circle cx="8" cy="8" r="7.2" fill="none" stroke="#222" stroke-width="1.3"/><path d="M13 13 L17.5 17.5 M5 8 H11" stroke="#222" stroke-width="1.3"/></svg>
<div class="a" style="left:981px;top:76px;width:80px;height:35px;border:1px solid #e0e0e0;border-radius:4px;background:#fff"></div>
<div class="t" style="left:996px;top:85px;font-size:15px;line-height:17px;color:#333;font-weight:normal;">100%</div>
<div class="a" style="left:1656px;top:88px;width:229px;height:126px;border:2px solid #20cabd"></div>
<svg class="a" style="left:1674px;top:117px" width="114" height="16" viewBox="0 0 114 16" ><rect x="1" y="2" width="6" height="5" fill="#b8e0f0"/><path d="M1.5 2 V7 M6.5 2 V7" stroke="#2a86a8" stroke-width="0.8"/><rect x="3" y="4" width="2" height="1.2" fill="#123"/><path d="M8 4.5 L45 6.5" stroke="#222" stroke-width="0.8"/><path d="M44 5 L47 6.6 L44 8Z" fill="#111"/><rect x="46.5" y="4" width="5.5" height="5.5" fill="#9cc7da"/><path d="M47 5 L49.2 7 L51.5 5 M49.2 5 V9" stroke="#0d2a3d" stroke-width="1.2" fill="none"/><path d="M53 6.3 L101 4.6" stroke="#222" stroke-width="0.8"/><path d="M100 3.2 L103 4.6 L100 6Z" fill="#111"/><rect x="104" y="2" width="6" height="5" fill="#b8e0f0"/><path d="M104.5 2 V7 M109.5 2 V7" stroke="#2a86a8" stroke-width="0.8"/><rect x="106" y="3.6" width="2" height="2" fill="#123"/><path d="M2 9.5 H7 M45.5 11.5 H52.5 M104 9.5 H109" stroke="#a09080" stroke-width="1.2"/></svg>
<svg class="a" style="left:1866px;top:196px" width="19" height="18" viewBox="0 0 19 18" ><circle cx="9.5" cy="9" r="7.5" fill="none" stroke="#20cabd" stroke-width="2"/></svg>
<div class="a" style="left:1885px;top:312px;width:8px;height:258px;background:#d6d6d6;border-radius:4px"></div>
<div class="a" style="left:968px;top:808px;width:468px;height:8px;background:#d6d6d6;border-radius:4px"></div>
<div class="a" style="left:1893px;top:38px;width:27px;height:811px;background:#f3f3f3;border-left:1px solid #cdcdcd"></div>
<div class="a" style="left:1894px;top:136px;width:26px;height:1px;background:#cdcdcd"></div>
<div class="a" style="left:1894px;top:256px;width:26px;height:1px;background:#cdcdcd"></div>
<div class="a" style="left:1894px;top:375px;width:26px;height:1px;background:#cdcdcd"></div>
<div class="a" style="left:1894px;top:506px;width:26px;height:1px;background:#cdcdcd"></div>
<div class="t" style="left:1898px;top:46px;font-size:15px;line-height:17px;color:#111;font-weight:normal;">数</div><div class="t" style="left:1898px;top:66px;font-size:15px;line-height:17px;color:#111;font-weight:normal;">据</div><div class="t" style="left:1898px;top:86px;font-size:15px;line-height:17px;color:#111;font-weight:normal;">源</div>
<div class="t" style="left:1898px;top:147px;font-size:15px;line-height:17px;color:#111;font-weight:normal;">离</div><div class="t" style="left:1898px;top:167px;font-size:15px;line-height:17px;color:#111;font-weight:normal;">线</div><div class="t" style="left:1898px;top:187px;font-size:15px;line-height:17px;color:#111;font-weight:normal;">资</div><div class="t" style="left:1898px;top:207px;font-size:15px;line-height:17px;color:#111;font-weight:normal;">源</div>
<div class="t" style="left:1898px;top:266px;font-size:15px;line-height:17px;color:#111;font-weight:normal;">三</div><div class="t" style="left:1898px;top:286px;font-size:15px;line-height:17px;color:#111;font-weight:normal;">方</div><div class="t" style="left:1898px;top:306px;font-size:15px;line-height:17px;color:#111;font-weight:normal;">服</div><div class="t" style="left:1898px;top:326px;font-size:15px;line-height:17px;color:#111;font-weight:normal;">务</div>
<div class="t" style="left:1898px;top:387px;font-size:15px;line-height:17px;color:#111;font-weight:normal;">命</div><div class="t" style="left:1898px;top:407px;font-size:15px;line-height:17px;color:#111;font-weight:normal;">名</div>
<div class="t" style="left:1900px;top:423px;font-size:15px;line-height:17px;color:#111;font-weight:normal;">S</div>
<div class="t" style="left:1900px;top:441px;font-size:15px;line-height:17px;color:#111;font-weight:normal;">q</div>
<div class="t" style="left:1903px;top:457px;font-size:15px;line-height:17px;color:#111;font-weight:normal;">l</div>
<div class="a" style="left:28px;top:818px;width:1865px;height:31px;background:#f3f3f3;border-top:1px solid #d4d4d4"></div>
<svg class="a" style="left:41px;top:826px" width="18" height="17" viewBox="0 0 18 17" ><path d="M5.5 4 A4 3.5 0 0 1 13 3.5" fill="none" stroke="#333" stroke-width="1.5"/><path d="M7 4.5 V8 M2 2 Q4 6 5 8 Q3 12 1.5 15 M14 6 L16 4" fill="none" stroke="#444" stroke-width="1.4"/><path d="M5 8 Q4 14 9 15.5" fill="none" stroke="#444" stroke-width="1.4"/><path d="M9.5 9.5 H17.5 M9.5 12.5 H17.5 M9.5 15.5 H17.5" stroke="#444" stroke-width="1.8"/></svg>
<div class="t" style="left:67px;top:826px;font-size:15px;line-height:17px;color:#222;font-weight:normal;">调试信息</div>
<svg class="a" style="left:154px;top:828px" width="17" height="13" viewBox="0 0 17 13" ><path d="M0 1.5 H2 M0 6.5 H2 M0 11.5 H2" stroke="#7a7a7a" stroke-width="2.6"/><path d="M4 1.5 H17 M4 6.5 H17 M4 11.5 H17" stroke="#6a6a6a" stroke-width="2.6"/></svg>
<div class="t" style="left:182px;top:826px;font-size:15px;line-height:17px;color:#222;font-weight:normal;">问题</div>
<div class="a" style="left:0px;top:849px;width:1920px;height:31px;background:#f3f3f3;border-top:1px solid #b4b4b4"></div>
<div class="t" style="left:25px;top:856px;font-size:15px;line-height:17px;color:#222;font-weight:normal;">查看资源「教师新增服务.bizx」详情</div>
<div class="a" style="left:0px;top:0px;width:1920px;height:880px;background:rgba(0,0,0,.5)"></div>
<div class="a" style="left:398px;top:133px;width:1125px;height:630px;background:#fff;border-radius:2px;box-shadow:0 1px 3px rgba(0,0,0,.35)"></div><div class="t" style="left:422px;top:160px;font-size:20px;line-height:22px;color:#222;font-weight:normal;line-height:24px">教师新增服务.bizx属性设置</div><svg class="a" style="left:1440px;top:159px" width="18" height="18" viewBox="0 0 18 18" ><path d="M1.7 5.5 V1.7 H5.5 M11.5 1.7 H15.8 V5.5 M15.8 11.5 V15.8 H11.5 M5.5 15.8 H1.7 V11.5" fill="none" stroke="#409eff" stroke-width="1.6"/></svg><svg class="a" style="left:1481px;top:162px" width="13" height="13" viewBox="0 0 13 13" ><path d="M1 1 L12 12 M12 1 L1 12" stroke="#909399" stroke-width="1.3"/></svg><div class="a" style="left:398px;top:234px;width:1125px;height:454px;overflow:hidden"><div class="a" style="left:-398px;top:-234px;width:1920px;height:880px"><div class="t" style="left:473px;top:227px;font-size:18px;line-height:20px;color:#409eff;font-weight:normal;line-height:20px">设置</div><div class="t" style="left:607px;top:227px;font-size:18px;line-height:20px;color:#666;font-weight:normal;line-height:20px">描述</div><div class="a" style="left:448px;top:258px;width:1003px;height:3px;background:#e4e7ed"></div><div class="a" style="left:448px;top:258px;width:85px;height:3px;background:#409eff"></div><div class="t" style="left:474px;top:285px;font-size:17px;line-height:19px;color:#f56c6c;font-weight:normal;">*</div><div class="t" style="left:488px;top:283px;font-size:17.3px;line-height:19.3px;color:#606266;font-weight:normal;line-height:20px">显示名称</div><div class="a" style="left:573px;top:278px;width:878px;height:35px;border:1px solid #dcdfe6;border-radius:4px;background:#fff"></div><div class="t" style="left:586px;top:287px;font-size:15px;line-height:17px;color:#444;font-weight:normal;">教师新增服务</div><div class="t" style="left:488px;top:341px;font-size:17.3px;line-height:19.3px;color:#606266;font-weight:normal;line-height:20px">访问权限</div><div class="a" style="left:573px;top:341px;width:50px;height:25px;background:#dcdfe6;border-radius:13px"></div><div class="a" style="left:575px;top:343px;width:21px;height:21px;background:#fff;border-radius:11px"></div><div class="t" style="left:447px;top:400px;font-size:17.3px;line-height:19.3px;color:#606266;font-weight:normal;line-height:20px">变量定义<span style="margin-left:4px">:</span></div><svg class="a" style="left:1375px;top:399px" width="19" height="19" viewBox="0 0 19 19" ><path d="M9.5 0 V19 M0 9.5 H19" stroke="#409eff" stroke-width="1.5"/></svg><svg class="a" style="left:1423px;top:398px" width="20" height="21" viewBox="0 0 20 21" ><path d="M0.3 4 H19.7 M7 4 V1 H13 V4" fill="none" stroke="#409eff" stroke-width="1.5"/><path d="M2.5 4 V20 H17.5 V4 M8 8 V16 M12 8 V16" fill="none" stroke="#409eff" stroke-width="1.5"/></svg><div class="a" style="left:448px;top:430px;width:1004px;height:95px;border:1px solid #e8eaec"></div><div class="a" style="left:449px;top:431px;width:1002px;height:34px;background:#f7f7f7;border-bottom:1px solid #e8eaec"></div><div class="a" style="left:496px;top:431px;width:1px;height:34px;background:#e8eaec"></div><div class="a" style="left:796px;top:431px;width:1px;height:34px;background:#e8eaec"></div><div class="a" style="left:1097px;top:431px;width:1px;height:34px;background:#e8eaec"></div><div class="a" style="left:1148px;top:431px;width:1px;height:34px;background:#e8eaec"></div><div class="t" style="left:322.5px;top:439px;width:300px;text-align:center;font-size:17.5px;line-height:20.5px;color:#5c5e63;font-weight:bold">#</div><div class="t" style="left:497.5px;top:439px;width:300px;text-align:center;font-size:17.5px;line-height:20.5px;color:#5c5e63;font-weight:bold">名称</div><div class="t" style="left:797.5px;top:439px;width:300px;text-align:center;font-size:17.5px;line-height:20.5px;color:#5c5e63;font-weight:bold">数据类型</div><div class="t" style="left:973.5px;top:439px;width:300px;text-align:center;font-size:17.5px;line-height:20.5px;color:#5c5e63;font-weight:bold">数组</div><div class="t" style="left:1149.5px;top:439px;width:300px;text-align:center;font-size:17.5px;line-height:20.5px;color:#5c5e63;font-weight:bold">描述</div><div class="t" style="left:800.0px;top:485px;width:300px;text-align:center;font-size:18px;line-height:21px;color:#666;font-weight:normal">暂无数据</div><div class="t" style="left:448px;top:538px;font-size:17.3px;line-height:19.3px;color:#606266;font-weight:normal;line-height:20px">参数配置表<span style="margin-left:4px">:</span></div><svg class="a" style="left:1338px;top:536px" width="21" height="21" viewBox="0 0 21 21" ><path d="M6 4 H3 A2 2 0 0 0 1 6 V18 A2 2 0 0 0 3 20 H15 A2 2 0 0 0 17 18 V10" fill="none" stroke="#409eff" stroke-width="1.6"/><path d="M17 1 V7 M14 4 H20" stroke="#409eff" stroke-width="1.4"/><path d="M9 5 V16 M5 12 L9 16 L13 12" fill="none" stroke="#409eff" stroke-width="1.6"/></svg><svg class="a" style="left:1381px;top:536px" width="21" height="21" viewBox="0 0 21 21" ><path d="M6 4 H3 A2 2 0 0 0 1 6 V18 A2 2 0 0 0 3 20 H15 A2 2 0 0 0 17 18 V10" fill="none" stroke="#409eff" stroke-width="1.6"/><path d="M17 1 V7 M14 4 H20" stroke="#409eff" stroke-width="1.4"/><path d="M9 16 V5 M5 9 L9 5 L13 9" fill="none" stroke="#409eff" stroke-width="1.6"/></svg><svg class="a" style="left:1423px;top:535px" width="20" height="21" viewBox="0 0 20 21" ><path d="M0.3 4 H19.7 M7 4 V1 H13 V4" fill="none" stroke="#409eff" stroke-width="1.5"/><path d="M2.5 4 V20 H17.5 V4 M8 8 V16 M12 8 V16" fill="none" stroke="#409eff" stroke-width="1.5"/></svg><div class="a" style="left:448px;top:568px;width:1004px;height:120px;border:1px solid #e8eaec"></div><div class="a" style="left:449px;top:569px;width:1002px;height:33px;background:#f7f7f7;border-bottom:2px solid #e8eaec"></div><div class="a" style="left:533px;top:569px;width:1px;height:118px;background:#e8eaec"></div><div class="a" style="left:822px;top:569px;width:1px;height:118px;background:#e8eaec"></div><div class="a" style="left:1109px;top:569px;width:1px;height:118px;background:#e8eaec"></div><div class="a" style="left:1160px;top:569px;width:1px;height:118px;background:#e8eaec"></div><div class="a" style="left:449px;top:645px;width:1002px;height:1px;background:#e8eaec"></div><div class="t" style="left:528.5px;top:576px;width:300px;text-align:center;font-size:17.5px;line-height:20.5px;color:#5c5e63;font-weight:bold">名称</div><div class="t" style="left:816.5px;top:576px;width:300px;text-align:center;font-size:17.5px;line-height:20.5px;color:#5c5e63;font-weight:bold">数据类型</div><div class="t" style="left:985.5px;top:576px;width:300px;text-align:center;font-size:17.5px;line-height:20.5px;color:#5c5e63;font-weight:bold">数组</div><div class="t" style="left:1155.5px;top:576px;width:300px;text-align:center;font-size:17.5px;line-height:20.5px;color:#5c5e63;font-weight:bold">描述</div><div class="t" style="left:341.0px;top:615px;width:300px;text-align:center;font-size:18px;line-height:21px;color:#606266;font-weight:normal">参数</div><div class="a" style="left:535px;top:606px;width:287px;height:35px;border:1px solid #dcdfe6;border-radius:4px;background:#fff"></div><div class="a" style="left:823px;top:606px;width:287px;height:35px;border:1px solid #dcdfe6;border-radius:4px;background:#fff"></div><svg class="a" style="left:1084px;top:619px" width="14" height="9" viewBox="0 0 14 9" ><path d="M1 1 L7 7 L13 1" fill="none" stroke="#b0b3b8" stroke-width="1.1"/></svg><div class="a" style="left:1128px;top:617px;width:17px;height:17px;border:1px solid #dcdfe6;border-radius:2px;background:#fff"></div><div class="a" style="left:1161px;top:606px;width:289px;height:35px;border:1px solid #dcdfe6;border-radius:4px;background:#fff"></div><div class="t" style="left:341.0px;top:659px;width:300px;text-align:center;font-size:18px;line-height:21px;color:#606266;font-weight:normal">返回值</div><div class="a" style="left:535px;top:650px;width:287px;height:35px;border:1px solid #dcdfe6;border-radius:4px;background:#fff"></div><div class="a" style="left:823px;top:650px;width:287px;height:35px;border:1px solid #dcdfe6;border-radius:4px;background:#fff"></div><svg class="a" style="left:1084px;top:663px" width="14" height="9" viewBox="0 0 14 9" ><path d="M1 1 L7 7 L13 1" fill="none" stroke="#b0b3b8" stroke-width="1.1"/></svg><div class="a" style="left:1128px;top:661px;width:17px;height:17px;border:1px solid #dcdfe6;border-radius:2px;background:#fff"></div><div class="a" style="left:1161px;top:650px;width:289px;height:35px;border:1px solid #dcdfe6;border-radius:4px;background:#fff"></div><div class="t" style="left:548px;top:615px;font-size:15px;line-height:17px;color:#333;font-weight:normal;">teacher</div><div class="t" style="left:836px;top:615px;font-size:15px;line-height:17px;color:#333;font-weight:normal;">Teacher</div><div class="t" style="left:548px;top:658px;font-size:15px;line-height:17px;color:#333;font-weight:normal;">out</div><div class="t" style="left:836px;top:658px;font-size:15px;line-height:17px;color:#333;font-weight:normal;">String</div><div class="a" style="left:1477px;top:234px;width:21px;height:454px;background:#f1f1f1"></div><div class="a" style="left:1479px;top:275px;width:17px;height:392px;background:#c1c1c1"></div><svg class="a" style="left:1482px;top:242px" width="11" height="7" viewBox="0 0 11 7" ><path d="M0.5 6 L5.5 1 L10.5 6Z" fill="#505050"/></svg><svg class="a" style="left:1482px;top:672px" width="11" height="7" viewBox="0 0 11 7" ><path d="M0.5 1 L5.5 6 L10.5 1Z" fill="#a3a3a3"/></svg></div></div><div class="a" style="left:1316px;top:700px;width:69px;height:35px;border:1px solid #dcdfe6;border-radius:4px;background:#fff"></div><div class="t" style="left:1320.5px;top:708px;width:60px;text-align:center;font-size:15px;line-height:18px;color:#606266;font-weight:normal">关闭</div><div class="a" style="left:1403px;top:700px;width:70px;height:35px;border-radius:4px;background:#409eff"></div><div class="t" style="left:1408.0px;top:708px;width:60px;text-align:center;font-size:15px;line-height:18px;color:#fff;font-weight:bold">确定</div><div class="a" style="left:448px;top:269px;width:283px;height:48px;border:4px solid #fa1d12;border-radius:4px"></div><div class="a" style="left:438px;top:589px;width:1050px;height:59px;border:4px solid #fa1d12;border-radius:4px"></div></body></html>
